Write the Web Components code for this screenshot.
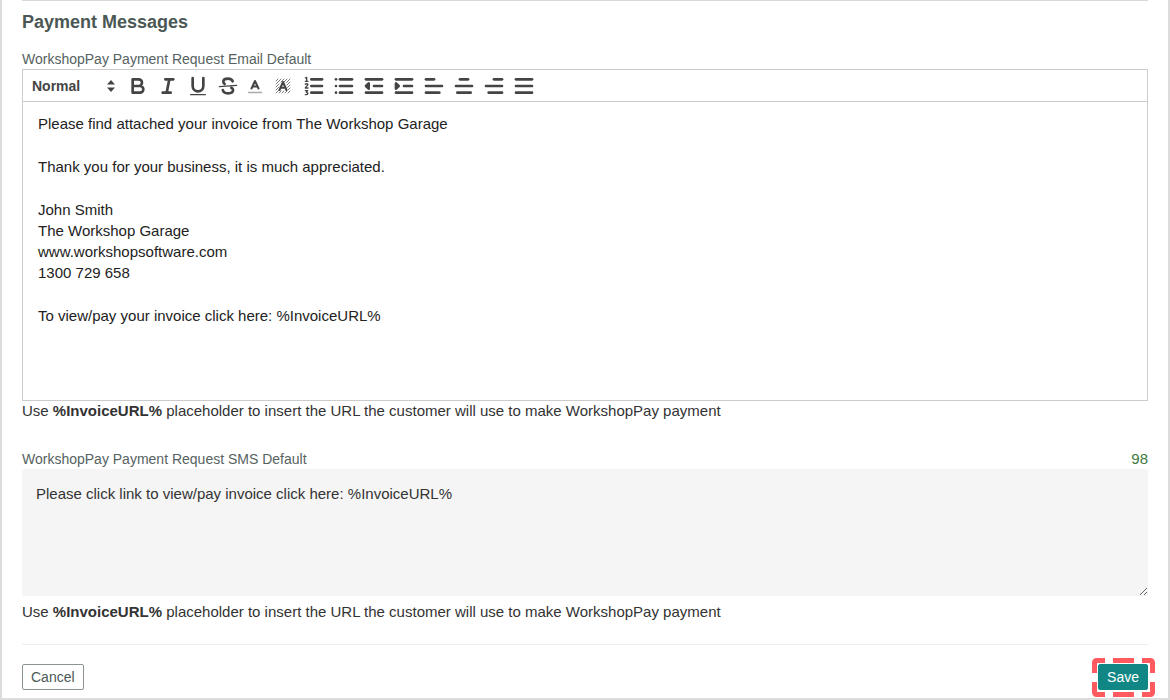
<!DOCTYPE html>
<html lang="en">
<head>
<meta charset="utf-8">
<title>Payment Messages</title>
<style>
  body { margin: 0; background: #fff; font: 14px/20px "Liberation Sans", sans-serif; color: #333; }
</style>
</head>
<body>
<settings-panel>
  <span slot="title">Payment Messages</span>
  <message-field>
    <rich-editor label="WorkshopPay Payment Request Email Default">
      <p>Please find attached your invoice from The Workshop Garage</p>
      <p>Thank you for your business, it is much appreciated.</p>
      <p>John Smith<br>The Workshop Garage<br>www.workshopsoftware.com<br>1300 729 658</p>
      <p>To view/pay your invoice click here: %InvoiceURL%</p>
    </rich-editor>
    <placeholder-hint slot="hint"></placeholder-hint>
  </message-field>
  <message-field>
    <sms-box label="WorkshopPay Payment Request SMS Default" count="98">Please click link to view/pay invoice click here: %InvoiceURL%</sms-box>
    <placeholder-hint slot="hint" spaced></placeholder-hint>
  </message-field>
  <action-button slot="actions">Cancel</action-button>
  <focus-marker slot="actions"><action-button primary>Save</action-button></focus-marker>
</settings-panel>

<script>
const define = (name, html, setup) => {
  const template = document.createElement('template');
  template.innerHTML = html;
  customElements.define(name, class extends HTMLElement {
    constructor() {
      super();
      this.attachShadow({ mode: 'open' }).append(template.content.cloneNode(true));
    }
    connectedCallback() { if (setup) setup(this, this.shadowRoot); }
  });
};

define('settings-panel', `
<style>
  :host { display: block; border: solid #dcdcdc; border-width: 0 2px 2px; padding: 0 20px; }
  hr { margin: 0; border: 0; height: 1px; background: #d8d8d8; }
  h2 { margin: 9px 0 15px; font-size: 18px; line-height: 24px; font-weight: 700; color: #4b5754; }
  main { display: flex; flex-direction: column; gap: 28px; }
  .end { margin-top: 22px; background: #eee; }
  footer { display: flex; justify-content: space-between; padding: 19px 0 8px; }
</style>
<hr>
<h2><slot name="title"></slot></h2>
<main><slot></slot></main>
<hr class="end">
<footer><slot name="actions"></slot></footer>`);

define('message-field', `
<style>:host { display: block; }</style>
<slot></slot><slot name="hint"></slot>`);

define('placeholder-hint', `
<style>
  :host { display: block; }
  :host([spaced]) { padding-top: 6px; }
  p { margin: 0; font-size: 15px; line-height: 20px; }
  strong { font-weight: 700; }
</style>
<p>Use <strong>%InvoiceURL%</strong> placeholder to insert the URL the customer will use to make WorkshopPay payment</p>`);

const bars = (...rows) => rows.map(([a, b, y]) => `<path d="M${a} ${y}H${b}"/>`).join('');
const icons = [
  ['Bold', '<path d="M5 4h4.5a2.5 2.5 0 0 1 0 5H5zM5 9h5.5a2.5 2.5 0 0 1 0 5H5z"/>'],
  ['Italic', '<path d="M7 4h6M5 14h6M8 14l2-10"/>'],
  ['Underline', '<path d="M5 3v6a4 4 0 0 0 8 0V3"/><path stroke-width="1" d="M3.500 15.500h11"/>'],
  ['Strikethrough', '<path stroke-width="1" d="M2.500 9.500l13-1"/><path d="M12.500 5.500C12 4 10.700 3.500 9 3.500c-2 0-3.500.9-3.500 2.300 0 .8.4 1.300 1 1.700M11.500 10.300c.8.4 1.300.9 1.300 1.700 0 1.600-1.700 2.500-3.800 2.500s-3.500-.8-3.900-2.500"/>'],
  ['Text colour', '<path stroke="#aaa" stroke-width="1.500" d="M2.500 15.500h13"/><path d="M5.500 11.500L9 4l3.500 7.500M6.500 9.500h5"/>', 'small'],
  ['Highlight colour', '<path stroke-width="1" opacity=".7" d="M2 4l2-2M2 7l5-5M2 10l3-3M2 13l3-3M2 16l3-3M7 5l3-3M10 5l3-3M12.500 5.500L16 2M13 8l3-3M13.500 10.500L16 8M14 13l2-2M5 16l2-2M8 16l2-2M11 16l2-2M14 16l2-2"/><path d="M5.500 13L9 5l3.500 8M6.500 10.700h5"/>', 'small'],
  ['Numbered list', bars([7, 15, 4], [7, 15, 9], [7, 15, 14]) + '<path stroke-width="1" d="M2.500 5.500h2M3.500 5.500v-3l-1 .5M2.500 7.700c.6-.6 1.900-.5 1.900.3 0 .7-1.900 1.600-1.900 2.500h2M2.500 12.500h1.700l-.9 1.300c1.500 0 1.500 1.700 0 1.700h-.8"/>'],
  ['Bulleted list', bars([6, 15, 4], [6, 15, 9], [6, 15, 14], [3, 3.01, 4], [3, 3.01, 9], [3, 3.01, 14])],
  ['Decrease indent', bars([3, 15, 4], [9, 15, 9], [3, 15, 14]) + '<path fill="currentColor" d="M5 7v4L3 9z"/>'],
  ['Increase indent', bars([3, 15, 4], [9, 15, 9], [3, 15, 14]) + '<path fill="currentColor" d="M3 7v4l2-2z"/>'],
  ['Align left', bars([3, 9, 4], [3, 15, 9], [3, 13, 14])],
  ['Align centre', bars([6, 12, 4], [3, 15, 9], [4, 14, 14])],
  ['Align right', bars([9, 15, 4], [3, 15, 9], [5, 15, 14])],
  ['Justify', bars([3, 15, 4], [3, 15, 9], [3, 15, 14])]
];

define('rich-editor', `
<style>
  :host { display: block; }
  .label { font-size: 14px; line-height: 20px; color: #56625f; }
  .frame { border: 1px solid #ccc; }
  .bar { display: flex; align-items: center; height: 31px; padding-left: 9px; border-bottom: 1px solid #ccc; color: #444; }
  .format { display: grid; align-items: center; width: 91px; }
  .format > * { grid-area: 1 / 1; }
  select { appearance: none; border: 0; padding: 0; width: 84px; background: none; color: #444; font: 600 14px/20px "Liberation Sans", sans-serif; }
  .arrows { width: 8px; height: 12px; margin-left: 75px; pointer-events: none; fill: #444; }
  button { display: flex; border: 0; background: none; color: inherit; padding: 3px; }
  button.small { padding: 3px 7px 3px 3px; }
  button svg { width: 24px; height: 24px; fill: none; stroke: currentColor; stroke-width: 2; stroke-linecap: round; stroke-linejoin: round; }
  button.small svg { width: 18px; height: 18px; }
  .text { min-height: 276px; padding: 11px 15px; outline: 0; color: #222; font: 15px/21px "Liberation Sans", sans-serif; }
  ::slotted(p) { margin: 0 0 22px; }
</style>
<div class="label" id="label"></div>
<div class="frame">
  <div class="bar" role="toolbar" aria-label="Formatting">
    <div class="format">
      <select aria-label="Text style"><option>Normal</option><option>Heading</option></select>
      <svg class="arrows" viewBox="0 0 8 12" aria-hidden="true"><path d="M4 0l4 4.500H0zM4 12l4-4.500H0z"/></svg>
    </div>
    ${icons.map(([name, art, cls = '']) => `<button type="button" class="${cls}" aria-label="${name}"><svg viewBox="0 0 18 18">${art}</svg></button>`).join('')}
  </div>
  <div class="text" role="textbox" aria-multiline="true" aria-labelledby="label" contenteditable="true" spellcheck="false"><slot></slot></div>
</div>`, (host, root) => { root.querySelector('.label').textContent = host.getAttribute('label'); });

define('sms-box', `
<style>
  :host { display: block; }
  .head { display: flex; justify-content: space-between; font-size: 14px; line-height: 20px; color: #56625f; }
  output { color: #3c7a3c; font-size: 15px; }
  textarea { display: block; box-sizing: border-box; width: 100%; height: 127px; padding: 15px 14px; border: 0; border-radius: 3px; outline: 0; background: #f5f5f5; color: #333; font: 15px/20px "Liberation Sans", sans-serif; resize: vertical; }
</style>
<div class="head"><label for="box"></label><output for="box"></output></div>
<textarea id="box" spellcheck="false"></textarea>`, (host, root) => {
  root.querySelector('label').textContent = host.getAttribute('label');
  root.querySelector('output').textContent = host.getAttribute('count');
  root.querySelector('textarea').value = host.textContent;
});

define('action-button', `
<style>
  :host { display: block; }
  button { display: block; height: 26px; padding: 0 8px; border: 1px solid #8c9492; border-radius: 2px; background: #fff; color: #4b5754; font: 14px/20px "Liberation Sans", sans-serif; }
  :host([primary]) button { border-color: #108784; background: #108784; color: #fff; }
</style>
<button type="button"><slot></slot></button>`);

define('focus-marker', `
<style>
  :host { display: block; position: relative; }
  svg { position: absolute; left: -6px; top: -6px; width: 63px; height: 39px; pointer-events: none; fill: none; stroke: #ff5a5f; stroke-width: 5; }
</style>
<slot></slot>
<svg viewBox="0 0 63 39" aria-hidden="true"><path d="M2.500 15V4.500a2 2 0 0 1 2-2H13M21 2.500h21M50 2.500h8.500a2 2 0 0 1 2 2V15M60.500 24v10.500a2 2 0 0 1-2 2H50M42 36.500H21M13 36.500H4.500a2 2 0 0 1-2-2V24"/></svg>`);
</script>
</body>
</html>
